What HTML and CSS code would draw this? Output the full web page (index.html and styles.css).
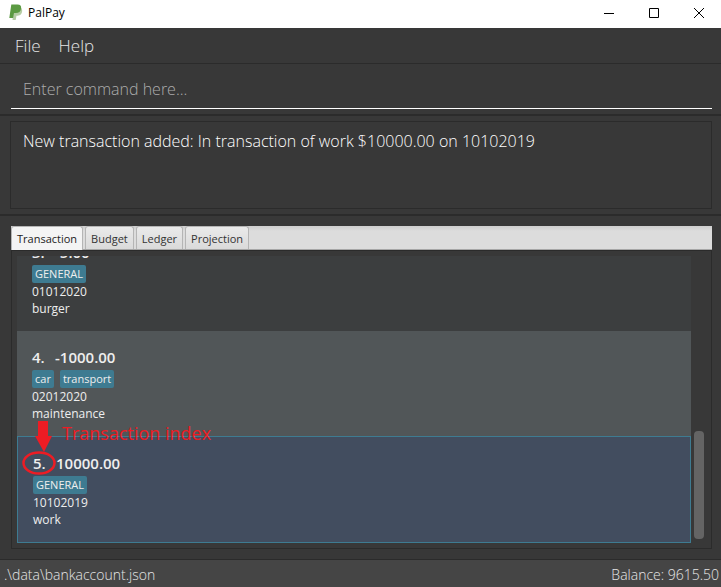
FILE: index.html
```html
<!DOCTYPE html>
<html lang="en">
<head>
<meta charset="utf-8">
<title>PalPay</title>
<link rel="stylesheet" href="styles.css">
</head>
<body>
<div class="window">
  <header class="titlebar">
    <svg class="logo" width="14" height="17" viewBox="0 0 14 17" aria-hidden="true">
      <path fill="#b5cda5" d="M5 4h7.200c1.600 1.300 1.200 5.200-.7 6.700-1.200.9-2.600 1-4 1L6.700 16H3.500z"/>
      <path fill="#5b9a42" d="M2.300.5h6.200c2.800 0 4 1.500 3.600 4-.4 3-2.300 4.500-5.200 4.500H5l-.9 5H.3z"/>
    </svg>
    <span class="app-name">PalPay</span>
    <div class="window-buttons">
      <button type="button" aria-label="Minimize"><svg width="10" height="10" viewBox="0 0 10 10"><path d="M0 5.500h10"/></svg></button>
      <button type="button" aria-label="Maximize"><svg width="10" height="10" viewBox="0 0 10 10"><path d="M.5.500h9v9h-9z"/></svg></button>
      <button type="button" aria-label="Close"><svg width="10" height="10" viewBox="0 0 10 10"><path d="M0 0l10 10M10 0L0 10"/></svg></button>
    </div>
  </header>

  <nav class="menubar">
    <button type="button">File</button>
    <button type="button">Help</button>
  </nav>

  <form class="command">
    <input type="text" aria-label="Command" placeholder="Enter command here...">
  </form>

  <section class="result">
    <output class="result-box">New transaction added: In transaction of work $10000.00 on 10102019</output>
  </section>

  <main class="content">
    <div class="tabs" role="tablist">
      <button type="button" class="tab selected" role="tab" aria-selected="true">Transaction</button>
      <button type="button" class="tab" role="tab" aria-selected="false">Budget</button>
      <button type="button" class="tab" role="tab" aria-selected="false">Ledger</button>
      <button type="button" class="tab" role="tab" aria-selected="false">Projection</button>
    </div>
    <div class="panel" role="tabpanel">
      <ul class="list">
        <li class="cell">
          <h2 class="amount"><span class="index">3.</span>-5.00</h2>
          <div class="tags"><span class="tag">GENERAL</span></div>
          <p>01012020</p>
          <p>burger</p>
        </li>
        <li class="cell alternate">
          <h2 class="amount"><span class="index">4.</span>-1000.00</h2>
          <div class="tags"><span class="tag">car</span><span class="tag">transport</span></div>
          <p>02012020</p>
          <p>maintenance</p>
        </li>
        <li class="cell active">
          <h2 class="amount"><span class="index">5.</span>10000.00</h2>
          <div class="tags"><span class="tag">GENERAL</span></div>
          <p>10102019</p>
          <p>work</p>
          <svg class="pointer" width="34" height="56" viewBox="0 0 34 56" aria-hidden="true">
            <path fill="#ed1c24" d="M16 1h10v15h4l-8 16-9-16h3z"/>
            <ellipse cx="17" cy="43" rx="15.500" ry="10.500" fill="none" stroke="#ed1c24" stroke-width="2.500"/>
          </svg>
          <span class="note">Transaction index</span>
        </li>
      </ul>
      <div class="scrollbar"><div class="thumb"></div></div>
    </div>
  </main>

  <footer class="statusbar">
    <span>.\data\bankaccount.json</span>
    <span>Balance: 9615.50</span>
  </footer>
</div>
</body>
</html>
```
FILE: styles.css
```css
* {
  box-sizing: border-box;
}

body {
  margin: 0;
  color: #fff;
  background: #383838;
  font-family: "Open Sans", "Noto Sans", sans-serif;
}

button,
input {
  margin: 0;
  padding: 0;
  border: 0;
  color: inherit;
  background: none;
  font: inherit;
}

.window {
  display: flex;
  flex-direction: column;
  height: 100vh;
}

.titlebar {
  display: flex;
  flex: none;
  align-items: center;
  height: 28px;
  padding: 0 0 3px 9px;
  color: #000;
  background: #fff;
}

.app-name {
  margin-left: 5px;
  font-size: 12px;
}

.window-buttons {
  display: flex;
  margin-left: auto;
}

.window-buttons button {
  display: grid;
  place-items: center;
  width: 45px;
  height: 25px;
}

.window-buttons path {
  fill: none;
  stroke: #000;
}

.menubar {
  display: flex;
  flex: none;
  gap: 18px;
  height: 36px;
  padding-left: 15px;
  border-bottom: 1px solid #2b2b2b;
  color: #e6e6e6;
  font-size: 17px;
  font-weight: 300;
}

.command {
  flex: none;
  height: 52px;
  padding: 5px 9px 5px 11px;
  border-bottom: 2px solid #2b2b2b;
}

.command input {
  width: 100%;
  height: 40px;
  padding: 0 12px;
  border-bottom: 1px solid #fff;
  font-size: 16px;
  font-weight: 300;
}

.command input::placeholder {
  color: #acacac;
  opacity: 1;
}

.result {
  flex: none;
  padding: 5px 9px 5px 10px;
  border-bottom: 2px solid #2b2b2b;
}

.result-box {
  display: block;
  height: 88px;
  padding: 8px 12px;
  border: 1px solid #2b2b2b;
  font-size: 16px;
  font-weight: 300;
  line-height: 22px;
}

.content {
  display: flex;
  flex: 1;
  flex-direction: column;
  min-height: 0;
  padding: 10px 9px 10px 11px;
}

.tabs {
  display: flex;
  flex: none;
  gap: 2px;
  height: 24px;
  border-bottom: 1px solid #a6a6a6;
  background: linear-gradient(#cecece, #dcdcdc 5px);
}

.tab {
  padding: 0 5px;
  border: 1px solid #b5b5b5;
  border-bottom: 0;
  border-radius: 3px 3px 0 0;
  color: #333;
  background: linear-gradient(#eaeaea, #dadada);
  font-size: 11px;
}

.tab.selected {
  margin-bottom: -1px;
  color: #222;
  background: #f4f4f4;
}

.panel {
  display: flex;
  flex: 1;
  min-height: 0;
  padding: 5px 7px 5px 5px;
  border: 1px solid #2b2b2b;
}

.list {
  display: flex;
  flex: 1;
  flex-direction: column;
  justify-content: flex-end;
  margin: 0;
  padding: 0;
  overflow: hidden;
  list-style: none;
}

.cell {
  position: relative;
  flex: none;
  padding: 16px 15px 14px;
  color: #eee;
  background: #3c3e3f;
  font-size: 12px;
  line-height: 17px;
}

.cell.alternate {
  background: #515658;
}

.cell.active {
  border: 1px solid #3e7b91;
  background: #424d5f;
}

.amount {
  display: flex;
  margin: 0 0 2px;
  font-size: 15px;
  font-weight: 600;
  line-height: 21px;
}

.index {
  min-width: 23px;
}

.tags {
  display: flex;
  gap: 6px;
}

.tag {
  padding: 0 3px;
  border-radius: 2px;
  background: #3e7b91;
  font-size: 11px;
  line-height: 18px;
}

.cell p {
  margin: 0;
}

.pointer {
  position: absolute;
  top: -17px;
  left: 4px;
  z-index: 1;
}

.note {
  position: absolute;
  top: -16px;
  left: 44px;
  color: #ed1c24;
  font-size: 18px;
  line-height: 24px;
}

.scrollbar {
  display: flex;
  flex-direction: column;
  justify-content: flex-end;
  margin-left: 3px;
  padding-bottom: 4px;
}

.thumb {
  width: 10px;
  height: 38%;
  border-radius: 4px;
  background: #646464;
}

.statusbar {
  display: flex;
  flex: none;
  justify-content: space-between;
  height: 28px;
  padding: 0 2px 0 4px;
  border-top: 1px solid #2b2b2b;
  color: #e6e6e6;
  background: #454545;
  font-size: 14px;
  font-weight: 300;
  line-height: 29px;
}
```
